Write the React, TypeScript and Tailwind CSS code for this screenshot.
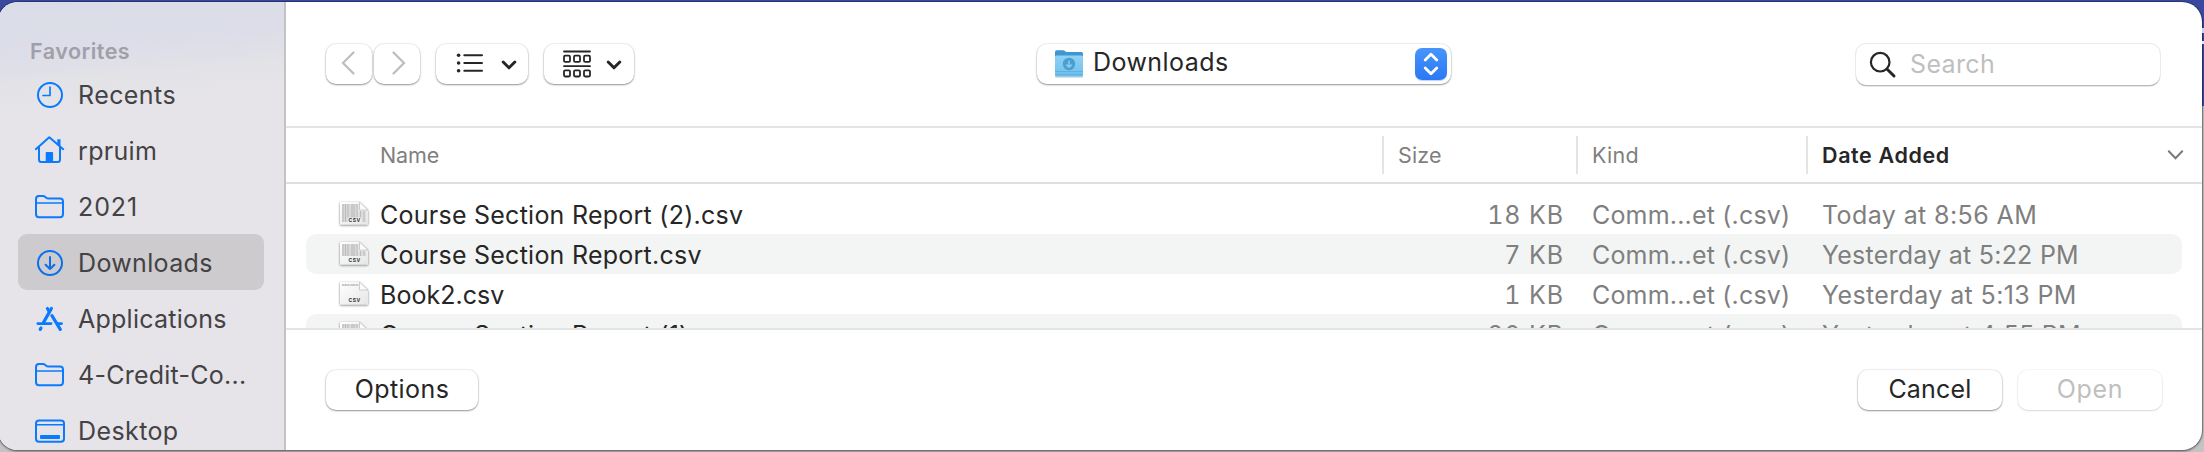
import React from "react";

const blue = "#0a7aff";

function ClockIcon() {
  return (
    <svg width="30" height="30" viewBox="0 0 30 30" fill="none" stroke={blue} strokeWidth="2" strokeLinecap="round" strokeLinejoin="round">
      <circle cx="15" cy="16" r="12" />
      <path d="M15 8v8.5H8" strokeWidth="1.7" />
    </svg>
  );
}

function HouseIcon() {
  return (
    <svg width="30" height="30" viewBox="0 0 30 30" fill="none" stroke={blue} strokeWidth="2" strokeLinecap="round" strokeLinejoin="round">
      <path d="M0.8 14.2 14.3 2.2 28.2 14.2" />
      <path d="M4 12v12.5c0 1.8.8 2.6 2.4 2.6h16.2c1.6 0 2.4-.8 2.4-2.6V12" />
      <path d="M22.3 4.2h3.2v7.3l-3.2-2.6z" fill={blue} stroke="none" />
      <path d="M10.7 28V18.2c0-.8.4-1.2 1.2-1.2h5c.8 0 1.2.4 1.2 1.2V28z" fill={blue} stroke="none" />
    </svg>
  );
}

function FolderIcon() {
  return (
    <svg width="30" height="30" viewBox="0 0 30 30" fill="none" stroke={blue} strokeWidth="2" strokeLinejoin="round">
      <path d="M1 23V8.2C1 6 2 5 4 5h3.6c1.3 0 2 .3 2.8 1l.8.7c.7.6 1.200.8 2.300.8H25c2.200 0 3 .9 3 3V23c0 2.200-.9 3.200-3 3.200H4c-2.200 0-3-1-3-3.200z" />
      <path d="M1 12h27" strokeWidth="1.6" />
    </svg>
  );
}

function DownloadIcon() {
  return (
    <svg width="30" height="30" viewBox="0 0 30 30" fill="none" stroke="#0a6fee" strokeWidth="2" strokeLinecap="round" strokeLinejoin="round">
      <circle cx="15" cy="16" r="12" />
      <path d="M15 10v12M10.6 17.7 15 22l4.4-4.3" />
    </svg>
  );
}

function AppsIcon() {
  return (
    <svg width="30" height="30" viewBox="0 0 30 30" fill="none" stroke={blue} strokeWidth="3.2" strokeLinecap="round">
      <path d="M16.4 5.5 8.6 19.4" />
      <path d="M12.4 5.5 14.5 9" />
      <path d="M16.9 12.6 25.3 26.3" />
      <path d="M2.8 20.6H16M22.5 20.6h4" strokeWidth="2.8" />
      <path d="M6 25 5.2 26.3" />
    </svg>
  );
}

function DesktopIcon() {
  return (
    <svg width="30" height="30" viewBox="0 0 30 30" fill="none" stroke={blue} strokeWidth="2">
      <rect x="1" y="5.4" width="28" height="21.4" rx="3" />
      <path d="M1 9.8h28" strokeWidth="1.6" />
      <rect x="5" y="20" width="20" height="4" rx="1" fill={blue} stroke="none" />
    </svg>
  );
}

const places = [
  { label: "Recents", icon: <ClockIcon />, track: "tracking-[0.42px]" },
  { label: "rpruim", icon: <HouseIcon />, track: "tracking-[0.33px]" },
  { label: "2021", icon: <FolderIcon />, track: "tracking-[0.9px]" },
  { label: "Downloads", icon: <DownloadIcon />, track: "tracking-[0.35px]", selected: true },
  { label: "Applications", icon: <AppsIcon />, track: "tracking-[0.24px]" },
  { label: "4-Credit-Co...", icon: <FolderIcon />, track: "tracking-[0.25px]" },
  { label: "Desktop", icon: <DesktopIcon />, track: "tracking-[0.4px]" },
];

function CsvIcon({ rows }: { rows: number }) {
  return (
    <svg width="32" height="28" viewBox="0 0 32 28" className="shrink-0">
      <defs>
        <linearGradient id="sheet" x1="0" y1="0" x2="1" y2="1">
          <stop offset="0" stopColor="#ffffff" />
          <stop offset="1" stopColor="#e6e6e6" />
        </linearGradient>
        <filter id="sheetShadow" x="-20%" y="-20%" width="140%" height="150%">
          <feDropShadow dx="0" dy="0.8" stdDeviation="0.9" floodColor="#000" floodOpacity="0.55" />
        </filter>
      </defs>
      <path d="M2 2h19.5L30 10v14.500H2z" fill="url(#sheet)" filter="url(#sheetShadow)" />
      <path d={`M4 4h16.500v${rows}H4z`} fill="#d9d9d9" />
      {rows > 5 && <path d={`M20.500 11H28v${rows - 7}h-7.500z`} fill="#dcdcdc" />}
      <g stroke="#9c9c9c" strokeOpacity="0.5" strokeWidth="1">
        {[5, 7.5, 10, 14, 16, 19].map((x) => (
          <path key={x} d={`M${x} 4v${rows}`} />
        ))}
        {rows > 5 && [22.5, 26].map((x) => <path key={x} d={`M${x} 11v${rows - 7}`} />)}
      </g>
      {rows > 12 && <path d="M9.500 17.500h14v5h-14z" fill="#f0f0f0" />}
      <path d="M21.5 2v8H30z" fill="#fbfbfb" stroke="#b0b0b0" strokeWidth="0.6" />
      <text x="16.6" y="22" textAnchor="middle" fontSize="5" fontWeight="700" fontFamily="Inter, sans-serif" letterSpacing="0.5" fill="#333">CSV</text>
    </svg>
  );
}

const files = [
  { name: "Course Section Report (2).csv", track: "tracking-[0.25px]", size: "18 KB", date: "Today at 8:56 AM", dateTrack: "tracking-[0.4px]", rows: 18 },
  { name: "Course Section Report.csv", track: "tracking-[0.25px]", size: "7 KB", date: "Yesterday at 5:22 PM", dateTrack: "tracking-[0.24px]", rows: 12 },
  { name: "Book2.csv", track: "tracking-[0.02px]", size: "1 KB", date: "Yesterday at 5:13 PM", dateTrack: "tracking-[0.38px]", rows: 2 },
  { name: "Course Section Report (1).csv", track: "tracking-[0.25px]", size: "20 KB", date: "Yesterday at 4:55 PM", dateTrack: "tracking-[0.3px]", rows: 12 },
];

function Raised({ className, children }: { className: string; children: React.ReactNode }) {
  return (
    <div className={`flex h-10 shrink-0 items-center rounded-[10px] bg-white shadow-[0_0_0_1px_rgba(0,0,0,0.05),0_1px_1.5px_rgba(0,0,0,0.3),0_1px_3px_rgba(0,0,0,0.1)] ${className}`}>
      {children}
    </div>
  );
}

function DownChevron() {
  return (
    <svg width="16" height="12" viewBox="0 0 16 12" fill="none" stroke="#262626" strokeWidth="3" strokeLinecap="round" strokeLinejoin="round">
      <path d="M2.2 3 8 8.8 13.8 3" />
    </svg>
  );
}

function ListIcon() {
  return (
    <svg width="28" height="20" viewBox="0 0 28 20" fill="none" stroke="#262626" strokeWidth="2" strokeLinecap="round">
      <path d="M8.3 2.3H26M8.3 10H26M8.3 17.7H26" />
      <g fill="#262626" stroke="none">
        <circle cx="2.6" cy="2.3" r="1.8" />
        <circle cx="2.6" cy="10" r="1.8" />
        <circle cx="2.6" cy="17.7" r="1.8" />
      </g>
    </svg>
  );
}

function GroupIcon() {
  return (
    <svg width="28" height="28" viewBox="0 0 28 28" fill="none" stroke="#262626" strokeWidth="1.8" strokeLinecap="round">
      <path d="M1 1.500h26M1 16.200h26" />
      {[1, 11, 21].map((x) => (
        <g key={x}>
          <rect x={x} y="5.700" width="6" height="6.200" rx="1.200" />
          <rect x={x} y="20.300" width="6" height="6.200" rx="1.200" />
        </g>
      ))}
    </svg>
  );
}

function DownloadsFolder() {
  return (
    <svg width="30" height="30" viewBox="0 0 30 30">
      <defs>
        <linearGradient id="front" x1="0" y1="0" x2="0" y2="1">
          <stop offset="0" stopColor="#8fd2f6" />
          <stop offset="1" stopColor="#6fbfec" />
        </linearGradient>
      </defs>
      <path d="M1 27.8h28v.8H1z" fill="#9aa4aa" opacity="0.6" />
      <path d="M1 3.500C1 2 1.600 1.300 3 1.300h6.300c1.500 0 2 1.800 3.500 1.800H27c1.400 0 2 .6 2 2V15H1z" fill="#3f97cd" />
      <path d="M1 8c0-1 .5-1.600 1.600-1.600h24.800c1.100 0 1.600.6 1.600 1.600v18c0 1.200-.5 1.800-1.600 1.800H2.600C1.500 27.800 1 27.200 1 26z" fill="url(#front)" />
      <path d="M1 22.600h28M1 25.600h28" stroke="#58a9da" strokeWidth="0.8" />
      <circle cx="15" cy="15" r="6.2" fill="#4a9fd0" />
      <path d="M15 11.600v6.400M12.200 15.600l2.800 2.600 2.800-2.600" fill="none" stroke="#86cbf2" strokeWidth="1.6" />
    </svg>
  );
}

export default function App() {
  return (
    <div className="relative h-[452px] w-[2204px] overflow-hidden bg-[linear-gradient(to_bottom,#3a489f_0,#3c4ba6_106px,#c4c4c4_106px,#c4c4c4_100%)] pt-[2px] font-['Inter',sans-serif] text-[25px] text-[#262626]">
      <span className="absolute top-[28px] right-0 h-[5px] w-[2px] bg-[#cdd2ec]" />
      <span className="absolute top-[41px] right-0 h-[3px] w-[2px] bg-[#e4e6f4]" />
      <div className="-ml-[2px] flex h-[448px] w-[2204px] overflow-hidden rounded-[20px] bg-white shadow-[0_0_0_1px_rgba(0,0,0,0.2),0_1px_2px_1px_rgba(0,0,0,0.3)]">
        <aside className="flex w-[288px] shrink-0 flex-col border-r-2 border-[#c3c2c5] bg-[linear-gradient(175deg,#dadde7_0,#dcdde8_52px,#e2e2e7_84px,#e6e4e8_112px)] pl-[20px]">
          <div className="-mb-px flex h-[65px] shrink-0 items-end pl-[12px] text-[21.5px] font-semibold tracking-[0.48px] text-[#a0a0aa]">Favorites</div>
          {places.map((p) => (
            <div key={p.label} className={`flex h-14 w-[246px] shrink-0 items-center gap-[13px] rounded-[9px] pl-[17px] text-[#434245] ${p.selected ? "bg-[#cdcbce]" : ""}`}>
              {p.icon}
              <span className={`pt-[4px] whitespace-nowrap ${p.track}`}>{p.label}</span>
            </div>
          ))}
        </aside>

        <main className="flex min-w-0 flex-1 flex-col">
          <header className="flex h-[126px] shrink-0 items-start border-b-2 border-[#e4e4e4] pt-[42px] pl-[40px]">
            <div className="flex gap-[2px]">
              <Raised className="w-[46px] justify-center">
                <svg width="14" height="24" viewBox="0 0 14 24" fill="none" stroke="#bdbdbd" strokeWidth="2.2" strokeLinecap="round" className="-mt-[2px] -ml-[3px]">
                  <path d="M12.500 1.500 2 12l10.500 10.500" />
                </svg>
              </Raised>
              <Raised className="w-[46px] justify-center">
                <svg width="14" height="24" viewBox="0 0 14 24" fill="none" stroke="#bdbdbd" strokeWidth="2.2" strokeLinecap="round" className="-mt-[2px] ml-[3px]">
                  <path d="M1.500 1.500 12 12 1.500 22.500" />
                </svg>
              </Raised>
            </div>
            <Raised className="ml-[16px] w-[92px] gap-[17px] pl-[20px]">
              <div className="-mt-[2px]"><ListIcon /></div>
              <div className="mt-[2px]"><DownChevron /></div>
            </Raised>
            <Raised className="ml-[16px] w-[90px] gap-[15px] pl-[19px]">
              <GroupIcon />
              <div className="mt-[2px]"><DownChevron /></div>
            </Raised>
            <Raised className="ml-[403px] w-[414px] pr-[4px] pl-[17px]">
              <DownloadsFolder />
              <span className="-mt-[2px] ml-[9px] flex-1 tracking-[0.43px]">Downloads</span>
              <div className="flex h-8 w-8 items-center justify-center rounded-[7px] bg-gradient-to-b from-[#4795fb] to-[#2b78f4] shadow-[0_1px_1px_rgba(40,110,240,0.3)]">
                <svg width="16" height="24" viewBox="0 0 16 24" fill="none" stroke="#fff" strokeWidth="2.8" strokeLinecap="round" strokeLinejoin="round">
                  <path d="M2.200 8 8 2.200 13.800 8M2.200 16 8 21.800 13.800 16" />
                </svg>
              </div>
            </Raised>
            <div className="ml-[405px] flex h-[41px] w-[304px] shrink-0 items-center rounded-[10px] bg-white pl-[13px] shadow-[0_0_0_1px_rgba(0,0,0,0.08),0_1.5px_0_rgba(0,0,0,0.2)]">
              <svg width="28" height="28" viewBox="0 0 28 28" fill="none" stroke="#262626" strokeLinecap="round">
                <circle cx="11.2" cy="11.2" r="9.3" strokeWidth="2.2" />
                <path d="M18.200 18.200 25 25" strokeWidth="3" />
              </svg>
              <span className="ml-[13px] tracking-[0.35px] text-[#bfbfbf]">Search</span>
            </div>
          </header>

          <div className="flex h-[56px] shrink-0 items-center border-b-2 border-[#dfdfdf] text-[21.5px] text-[#7f7f7f]">
            <div className="w-[1096px] shrink-0 pl-[94px] tracking-[-0.15px]">Name</div>
            <div className="flex h-[38px] w-[194px] shrink-0 items-center border-l-2 border-[#e4e4e4] pl-[14px] tracking-[0.15px]">Size</div>
            <div className="flex h-[38px] w-[230px] shrink-0 items-center border-l-2 border-[#e4e4e4] pl-[14px] tracking-[0.27px]">Kind</div>
            <div className="flex h-[38px] flex-1 items-center justify-between border-l-2 border-[#e4e4e4] pr-[18px] pl-[14px] font-semibold tracking-[0.62px] text-[#262626]">
              Date Added
              <svg width="17" height="12" viewBox="0 0 17 12" fill="none" stroke="#7a7a7a" strokeWidth="2" strokeLinecap="round">
                <path d="M1.800 2.300 8.500 9.300 15.200 2.300" />
              </svg>
            </div>
          </div>

          <div className="h-[146px] shrink-0 overflow-hidden border-b-2 border-[#e4e4e4] px-5 pt-[10px]">
            {files.map((f, i) => (
              <div key={f.name} className={`flex h-10 items-center rounded-[10px] pl-[32px] whitespace-nowrap text-[#7f7f7f] ${i % 2 ? "bg-[#f3f5f4]" : ""}`}>
                <CsvIcon rows={f.rows} />
                <div className={`ml-[10px] w-[1002px] shrink-0 pt-[3px] text-[#262626] ${f.track}`}>{f.name}</div>
                <div className="w-[187px] shrink-0 pt-[3px] pr-[5px] text-right tracking-[0.9px] tabular-nums">{f.size}</div>
                <div className="ml-[23px] w-[230px] shrink-0 pt-[3px] tracking-[0.18px]">Comm...et (.csv)</div>
                <div className={`pt-[3px] ${f.dateTrack}`}>{f.date}</div>
              </div>
            ))}
          </div>

          <footer className="flex flex-1 items-start justify-between px-[40px] pt-[40px]">
            <Raised className="w-[152px] justify-center tracking-[0.43px]"><span className="-mt-px">Options</span></Raised>
            <div className="flex gap-4">
              <Raised className="w-[144px] justify-center tracking-[0.21px]"><span className="-mt-px">Cancel</span></Raised>
              <div className="flex h-10 w-[144px] items-center justify-center rounded-[10px] bg-white tracking-[0.65px] text-[#bfbfbf] shadow-[0_0_0_1px_rgba(0,0,0,0.03),0_1px_2px_rgba(0,0,0,0.12)]">
                <span className="-mt-px">Open</span>
              </div>
            </div>
          </footer>
        </main>
      </div>
    </div>
  );
}
